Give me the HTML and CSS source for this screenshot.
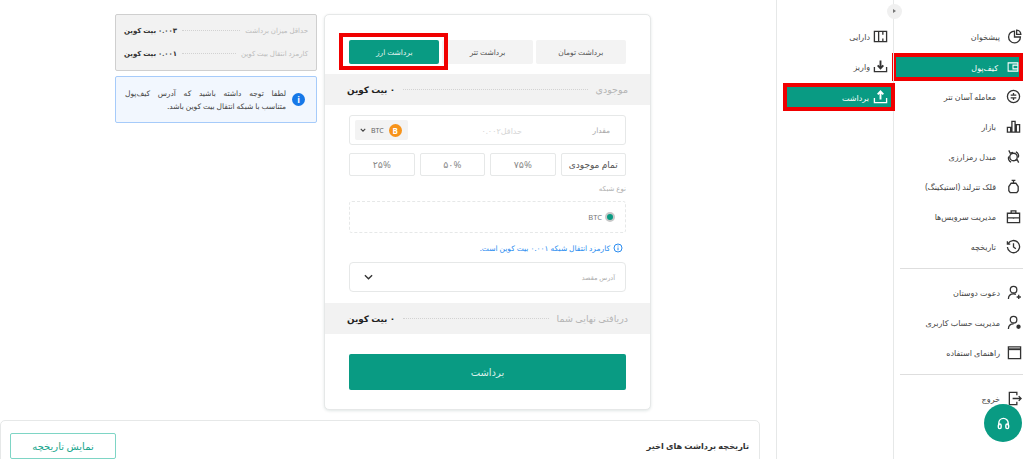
FILE: index.html
```html
<!DOCTYPE html>
<html lang="fa" dir="rtl">
<head>
    <meta charset="UTF-8">
    <meta name="viewport" content="width=device-width, initial-scale=1.0">
    <title>برداشت ارز</title>
    <link rel="stylesheet" href="styles.css">
</head>
<body>
    <div class="page">
        <nav class="main-nav">
            <a class="nav-item"><svg class="icon" viewBox="0 0 16 16"><path d="M8 2.200a6.300 6.300 0 1 0 6.300 6.300H8z"/><path d="M10.300 1.200a5 5 0 0 1 4.500 4.600h-4.500z"/></svg><span>پیشخوان</span></a>
            <a class="nav-item is-active"><svg class="icon" viewBox="0 0 16 16"><path d="M1.500 2.500h13v11h-13z"/><path d="M14.500 5.500H8v5h6.500"/></svg><span>کیف‌پول</span></a>
            <a class="nav-item far"><svg class="icon" viewBox="0 0 16 16"><circle cx="8" cy="8" r="6.500"/><path d="M5 6.500h6M5 9.500h6M8 4.300v1.500M8 10.200v1.500"/></svg><span>معامله آسان تتر</span></a>
            <a class="nav-item far"><svg class="icon" viewBox="0 0 16 16"><path d="M1.500 9h3.500v5H1.500zM6.300 2.500h3.400V14H6.300zM11 6h3.500v8H11z"/></svg><span>بازار</span></a>
            <a class="nav-item far"><svg class="icon" viewBox="0 0 16 16"><circle cx="8" cy="8.500" r="4"/><path d="M3 1.500l1.500 3 3-1M13.500 14.500l-1.500-3-3 1M3 8c-1 2 0 5 2.500 6M13 9c1-2 0-5-2.500-6"/></svg><span>مبدل رمزارزی</span></a>
            <a class="nav-item far"><svg class="icon" viewBox="0 0 16 16"><path d="M6 1.500h4M8 1.500v3"/><path d="M5.500 4.500h5l2.500 3.500v4.500l-1.500 2h-7l-1.500-2V8z"/></svg><span>قلک تترلند (استیکینگ)</span></a>
            <a class="nav-item far"><svg class="icon" viewBox="0 0 16 16"><path d="M1.500 4.500h13v10h-13zM5.500 4.500V2h5v2.500M1.500 9.500h13M8 8.800v1.500"/></svg><span>مدیریت سرویس‌ها</span></a>
            <a class="nav-item far"><svg class="icon" viewBox="0 0 16 16"><path d="M2.300 5a6.500 6.500 0 1 1-.8 3.500M1.500 2.500V5.500h3M8 4.500V8.500l2.500 2"/></svg><span>تاریخچه</span></a>
            <hr class="nav-line">
            <a class="nav-item"><svg class="icon" viewBox="0 0 16 16"><circle cx="7" cy="5" r="3.500"/><path d="M1.500 15c0-3.500 2-5.500 5.500-5.500 1 0 2 .2 2.500.5M12.500 10.500v4.500M10.300 12.800h4.500"/></svg><span>دعوت دوستان</span></a>
            <a class="nav-item"><svg class="icon" viewBox="0 0 16 16"><circle cx="7" cy="5" r="3.500"/><path d="M1.500 15c0-3.500 2-5.500 5.500-5.500"/><circle class="dot" cx="12.300" cy="12.500" r="2.300"/></svg><span>مدیریت حساب کاربری</span></a>
            <a class="nav-item"><svg class="icon" viewBox="0 0 16 16"><path d="M1.500 2h13v12.500h-13z"/><path class="thick" d="M1.500 4.500h13"/></svg><span>راهنمای استفاده</span></a>
            <hr class="nav-line">
            <a class="nav-item"><svg class="icon" viewBox="0 0 16 16"><path d="M10.500 4.500V1.500h-8v13h8v-3M6 8h9M12.500 5.500L15 8l-2.500 2.500"/></svg><span>خروج</span></a>
        </nav>

        <nav class="sub-nav">
            <a class="nav-item"><svg class="icon" viewBox="0 0 16 16"><path d="M1.500 2.500h13v11h-13zM6 2.500v11M10.500 2.500v3.500M10.500 10v3.500"/></svg><span>دارایی</span></a>
            <a class="nav-item"><svg class="icon" viewBox="0 0 16 16"><path d="M1.500 8.500v5h13v-5"/><path d="M8 1.500v8M5 6.800L8 10l3-3.200" class="thick"/></svg><span>واریز</span></a>
            <a class="nav-item is-active"><svg class="icon" viewBox="0 0 16 16"><path d="M1.500 8.500v5h13v-5"/><path d="M8 10V2M5 4.700L8 1.500l3 3.200" class="thick"/></svg><span>برداشت</span></a>
        </nav>

        <main class="content">
            <div class="top-row">
                <section class="card">
                    <div class="tabs">
                        <button class="tab">برداشت تومان</button>
                        <button class="tab">برداشت تتر</button>
                        <button class="tab is-active">برداشت ارز</button>
                    </div>

                    <div class="strip">
                        <span class="strip-label">موجودی</span>
                        <i class="dots"></i>
                        <b>۰ بیت کوین</b>
                    </div>

                    <div class="form-area">
                        <div class="amount">
                            <span class="amount-label">مقدار</span>
                            <span class="amount-hint">حداقل۰.۰۰۲</span>
                            <span class="coin">
                                <i class="coin-logo">B</i>
                                <span dir="ltr">BTC</span>
                                <svg class="caret" viewBox="0 0 8 5"><path d="M1 1l3 3 3-3"/></svg>
                            </span>
                        </div>
                        <div class="percents">
                            <button class="pct pct-all">تمام موجودی</button>
                            <button class="pct">۷۵%</button>
                            <button class="pct">۵۰%</button>
                            <button class="pct">۲۵%</button>
                        </div>
                        <div class="small-label">نوع شبکه</div>
                        <div class="network">
                            <i class="radio"></i>
                            <span dir="ltr">BTC</span>
                        </div>
                        <div class="fee-note">
                            <svg class="note-icon" viewBox="0 0 10 10"><circle cx="5" cy="5" r="4"/><path d="M5 4.500V7.300M5 2.500v1"/></svg>
                            <span>کارمزد انتقال شبکه ۰.۰۰۱ بیت کوین است.</span>
                        </div>
                        <div class="address">
                            <span>آدرس مقصد</span>
                            <svg class="chevron" viewBox="0 0 10 6"><path d="M1 1l4 4 4-4"/></svg>
                        </div>
                    </div>

                    <div class="strip strip-final">
                        <span class="strip-label">دریافتی نهایی شما</span>
                        <i class="dots"></i>
                        <b>۰ بیت کوین</b>
                    </div>

                    <div class="submit-area">
                        <button class="submit">برداشت</button>
                    </div>
                </section>

                <aside class="side-info">
                    <div class="limits">
                        <div class="limit-row">
                            <span>حداقل میزان برداشت</span>
                            <i class="dots"></i>
                            <b>۰.۰۰۳ بیت کوین</b>
                        </div>
                        <div class="limit-row">
                            <span>کارمزد انتقال بیت کوین</span>
                            <i class="dots"></i>
                            <b>۰.۰۰۱ بیت کوین</b>
                        </div>
                    </div>
                    <div class="notice">
                        <i class="notice-icon">i</i>
                        <p><span class="notice-first">لطفا توجه داشته باشید که آدرس کیف‌پول</span> متناسب با شبکه انتقال بیت کوین باشد.</p>
                    </div>
                </aside>
            </div>

            <section class="history">
                <h2>تاریخچه برداشت های اخیر</h2>
                <button class="history-btn">نمایش تاریخچه</button>
            </section>
        </main>

        <span class="nav-toggle"></span>
        <a class="support">
            <svg viewBox="0 0 16 16"><path d="M3 10V7.500a5 5 0 0 1 10 0V10"/><rect x="2.500" y="8.500" width="3" height="5" rx="1.500"/><rect x="10.500" y="8.500" width="3" height="5" rx="1.500"/></svg>
        </a>
    </div>
</body>
</html>
```

FILE: styles.css
```css
:root {
    --green: #099b83;
    --line: #e6e8e8;
    --red: #f00000;
    --text: #333;
    --muted: #b5b5b5;
}

html, body {
    margin: 0;
    height: 100%;
    background: #fff;
}

body {
    font-family: "Noto Sans", "DejaVu Sans", sans-serif;
    color: var(--text);
    overflow: hidden;
}

button {
    font-family: inherit;
    cursor: pointer;
}

.page {
    position: relative;
    display: flex;
    height: 459px;
    overflow: hidden;
}

/* side menus */
.main-nav {
    width: 130px;
    flex: none;
    padding-top: 21px;
    box-sizing: border-box;
}

.sub-nav {
    width: 118px;
    flex: none;
    padding-top: 21px;
    box-sizing: border-box;
    border-right: 1px solid var(--line);
    border-left: 1px solid var(--line);
}

.nav-item {
    display: flex;
    align-items: center;
    gap: 7px;
    height: 30px;
    padding-right: 2px;
    box-sizing: border-box;
    font-size: 8px;
    color: #444;
    white-space: nowrap;
}

.nav-item.far {
    gap: 10px;
    padding-right: 3px;
}

.icon {
    width: 15px;
    height: 15px;
    flex: none;
    fill: none;
    stroke: #333;
    stroke-width: 1.400;
}

.icon .thick {
    stroke-width: 2;
}

.icon .dot {
    fill: #333;
    stroke: none;
}

.nav-item.is-active {
    height: 28px;
    margin-top: 2px;
    border: 4px solid var(--red);
    background: var(--green);
    color: #fff;
}

.nav-item.is-active .icon {
    stroke: #fff;
}

.main-nav .is-active {
    margin-right: 1px;
    margin-left: -2px;
    padding-right: 0;
    gap: 9px;
}

.main-nav .is-active .icon {
    width: 12px;
    height: 12px;
}

.sub-nav .nav-item {
    gap: 3px;
    padding-right: 5px;
}

.sub-nav .is-active {
    margin-right: -2px;
    margin-left: 6px;
    padding-right: 3px;
    gap: 4px;
}

.nav-line {
    height: 1px;
    margin: 7px 1px 8px 6px;
    border: 0;
    background: #dedede;
}

.nav-toggle {
    position: absolute;
    top: 4px;
    left: 887px;
    width: 15px;
    height: 15px;
    border-radius: 50%;
    background: #f0f0f0;
}

.nav-toggle::after {
    content: "";
    position: absolute;
    top: 5px;
    left: 6px;
    border-left: 3px solid #777;
    border-top: 2.500px solid transparent;
    border-bottom: 2.500px solid transparent;
}

.support {
    position: absolute;
    top: 404px;
    left: 984px;
    display: flex;
    align-items: center;
    justify-content: center;
    width: 38px;
    height: 38px;
    border-radius: 50%;
    background: var(--green);
}

.support svg {
    width: 15px;
    height: 15px;
    fill: none;
    stroke: #fff;
    stroke-width: 1.500;
}

/* content */
.content {
    width: 776px;
    flex: none;
    padding-right: 16px;
    box-sizing: border-box;
}

.top-row {
    display: flex;
    align-items: flex-start;
    gap: 7px;
    padding: 14px 109px 0 0;
}

.card {
    width: 327px;
    height: 396px;
    flex: none;
    box-sizing: border-box;
    padding-top: 25px;
    background: #fff;
    border: 1px solid var(--line);
    border-radius: 5px;
    box-shadow: 0 1px 3px rgba(0, 60, 50, 0.12);
}

.tabs {
    display: flex;
    gap: 3px;
    margin: 0 24px;
}

.tab {
    position: relative;
    flex: 1;
    height: 24px;
    padding: 0;
    border: 0;
    border-radius: 2px;
    background: #f3f3f3;
    color: #555;
    font-size: 7.500px;
}

.tab.is-active {
    background: var(--green);
    color: #e4f5f1;
}

.tab.is-active::after {
    content: "";
    position: absolute;
    inset: -7px -9px -6px -10px;
    border: 4px solid var(--red);
}

.strip {
    display: flex;
    align-items: center;
    gap: 8px;
    height: 31px;
    margin-top: 10px;
    padding: 0 22px;
    background: #f2f2f2;
    font-size: 9.500px;
}

.strip b {
    font-size: 8.800px;
    color: #222;
}

.strip-label {
    color: var(--muted);
}

.dots {
    flex: 1;
    border-top: 1px dotted #d2d2d2;
}

.form-area {
    margin: 10px 24px 0;
}

.amount {
    display: flex;
    align-items: center;
    height: 30px;
    box-sizing: border-box;
    padding: 0 15px 0 5px;
    border: 1px solid var(--line);
    border-radius: 3px;
    font-size: 7.500px;
    color: #aaa;
}

.amount-label {
    width: 88px;
    flex: none;
    color: #a8a8a8;
}

.amount-hint {
    flex: 1;
    font-size: 8px;
    color: #d5d5d5;
}

.coin {
    display: flex;
    align-items: center;
    gap: 5px;
    height: 20px;
    padding: 0 6px 0 5px;
    background: #f3f3f3;
    border-radius: 2px;
    color: #666;
    font-size: 7px;
}

.coin-logo {
    display: flex;
    align-items: center;
    justify-content: center;
    width: 13px;
    height: 13px;
    border-radius: 50%;
    background: #f7931a;
    color: #fff;
    font-size: 8px;
    font-weight: 700;
    font-style: normal;
}

.caret {
    width: 6px;
    height: 4px;
    fill: none;
    stroke: #444;
    stroke-width: 1.500;
}

.percents {
    display: flex;
    gap: 5px;
    margin-top: 8px;
}

.pct {
    flex: 1;
    height: 23px;
    padding: 0;
    background: #fff;
    border: 1px solid var(--line);
    border-radius: 2px;
    color: #8a8a8a;
    font-size: 9.500px;
}

.pct-all {
    color: #555;
    font-size: 9px;
}

.small-label {
    height: 25px;
    line-height: 25px;
    font-size: 7px;
    color: #b0b0b0;
}

.network {
    display: flex;
    align-items: center;
    gap: 3px;
    height: 32px;
    box-sizing: border-box;
    padding-right: 10px;
    border: 1px dashed var(--line);
    border-radius: 3px;
    color: #777;
    font-size: 7.500px;
}

.radio {
    width: 6px;
    height: 6px;
    border-radius: 50%;
    background: var(--green);
    border: 2px solid #c9c9c9;
}

.fee-note {
    display: flex;
    align-items: center;
    gap: 3px;
    height: 29px;
    padding-right: 3px;
    color: #2a8cf0;
    font-size: 7.500px;
}

.note-icon {
    width: 10px;
    height: 10px;
    fill: none;
    stroke: #2a8cf0;
}

.address {
    display: flex;
    align-items: center;
    justify-content: space-between;
    height: 30px;
    box-sizing: border-box;
    padding: 0 10px 0 14px;
    border: 1px solid var(--line);
    border-radius: 4px;
    font-size: 6.500px;
    color: #aaa;
}

.chevron {
    width: 9px;
    height: 6px;
    fill: none;
    stroke: #333;
    stroke-width: 1.500;
}

.strip-final {
    margin-top: 11px;
}

.submit-area {
    margin: 20px 24px 0;
}

.submit {
    width: 100%;
    height: 36px;
    border: 0;
    border-radius: 2px;
    background: var(--green);
    color: #d8f0ea;
    font-size: 10px;
}

/* left column */
.side-info {
    display: flex;
    flex-direction: column;
    gap: 5px;
    width: 202px;
    flex: none;
}

.limits {
    display: flex;
    flex-direction: column;
    justify-content: center;
    gap: 9px;
    height: 57px;
    box-sizing: border-box;
    padding: 0 8px 2px;
    background: #f2f2f2;
    border: 1px solid #cfcfcf;
    border-radius: 2px;
    font-size: 7px;
    color: #bbb;
}

.limit-row {
    display: flex;
    align-items: center;
    gap: 5px;
    height: 14px;
}

.limit-row b {
    color: #333;
    font-weight: 700;
}

.notice {
    display: flex;
    align-items: center;
    gap: 6px;
    height: 47px;
    box-sizing: border-box;
    padding: 0 11px 0 9px;
    background: #f2f7fe;
    border: 1px solid #a6cbfa;
    border-radius: 2px;
}

.notice p {
    flex: 1;
    margin: 0;
    font-size: 7.500px;
    line-height: 13px;
    color: #444;
}

.notice-first {
    display: block;
    text-align: justify;
    text-align-last: justify;
}

.notice-icon {
    display: flex;
    align-items: center;
    justify-content: center;
    width: 13px;
    height: 13px;
    flex: none;
    border-radius: 50%;
    background: #1678e8;
    color: #fff;
    font-size: 9px;
    font-weight: 700;
    font-style: normal;
}

.history {
    display: flex;
    align-items: flex-start;
    justify-content: space-between;
    height: 60px;
    margin-top: 10px;
    padding: 12px 10px 0 9px;
    box-sizing: border-box;
    border: 1px solid var(--line);
    border-radius: 5px 5px 0 0;
}

.history h2 {
    margin: 0;
    line-height: 26px;
    font-size: 8.200px;
    font-weight: 700;
    color: #333;
}

.history-btn {
    width: 106px;
    height: 26px;
    padding: 0;
    background: #fff;
    border: 1px solid #7ed5c5;
    border-radius: 2px;
    color: #17a58c;
    font-size: 10px;
}
```
